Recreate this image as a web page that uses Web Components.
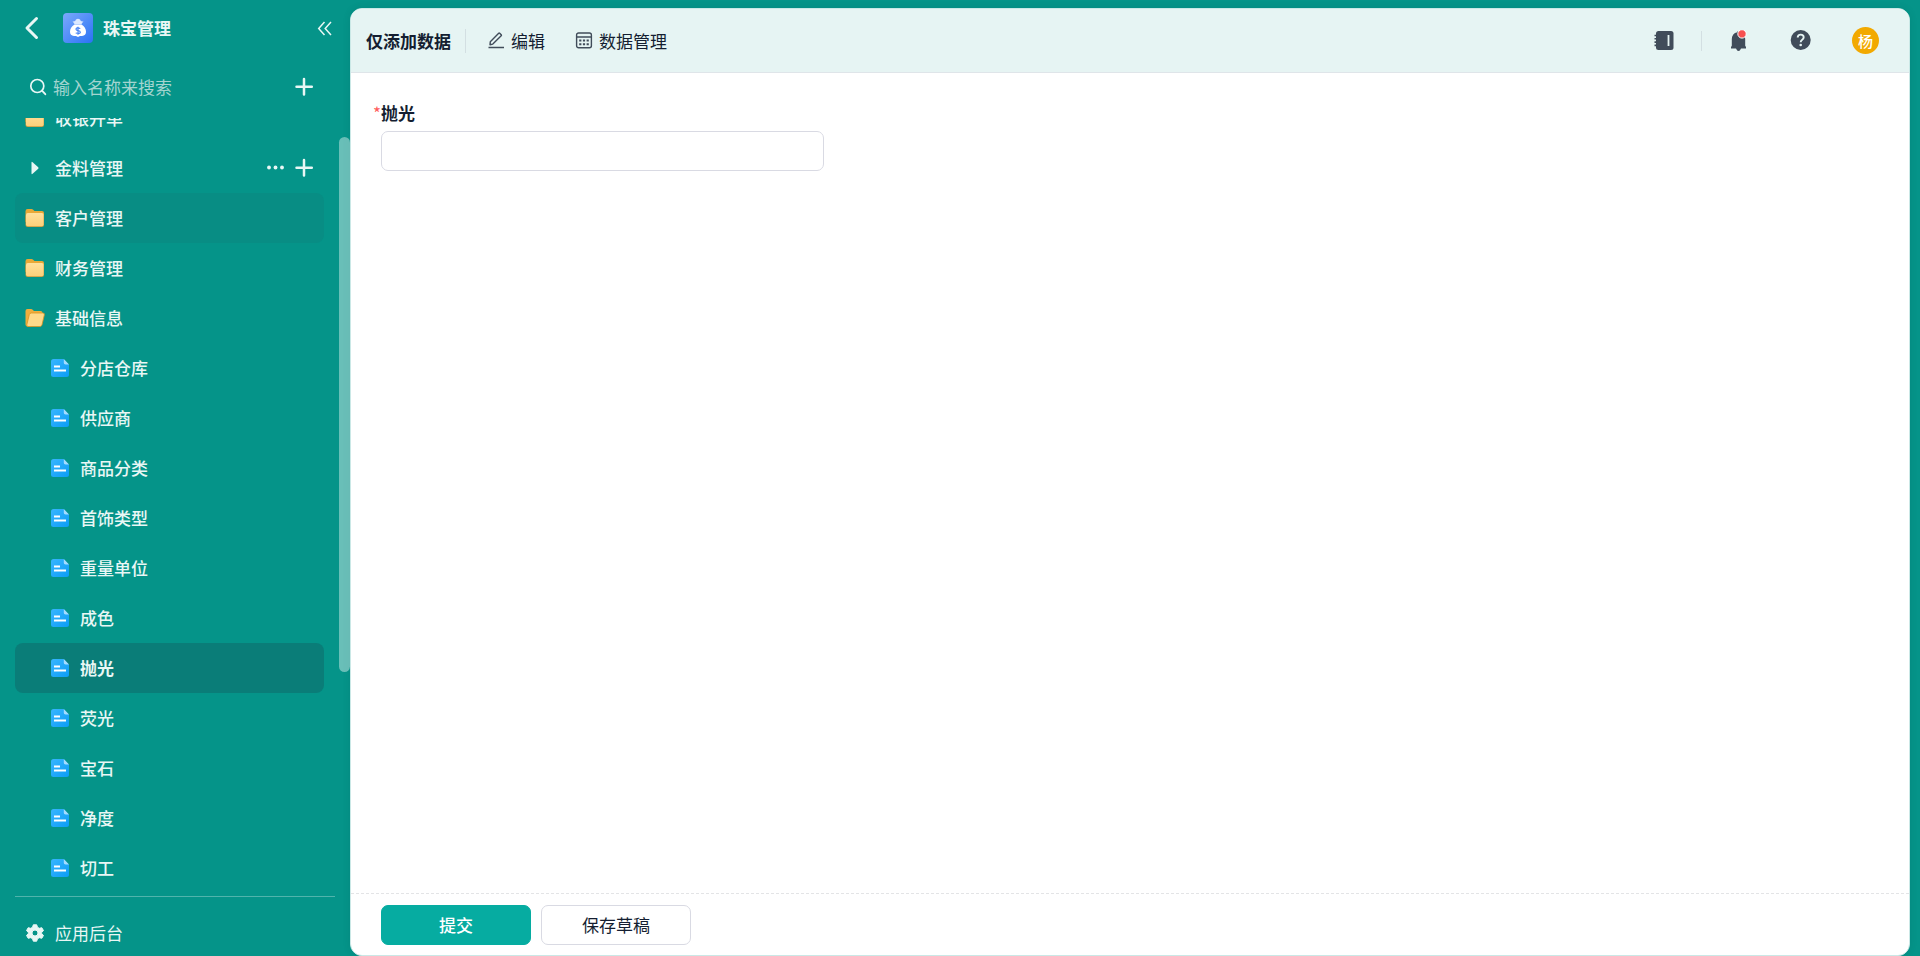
<!DOCTYPE html>
<html lang="zh-CN">
<head>
  <meta charset="utf-8">
  <title>珠宝管理</title>
  <style>
    html, body {
      height: 100%;
      margin: 0;
    }
    body {
      font: 17px/24px "Noto Sans CJK SC", sans-serif;
      color: #141e31;
      background: #059489;
    }
  </style>
</head>
<body>
  <app-shell>
    <side-bar slot="side">
      <nav-item icon="folder">收银开单</nav-item>
      <nav-item icon="caret" actions>金料管理</nav-item>
      <nav-item icon="folder" hovered>客户管理</nav-item>
      <nav-item icon="folder">财务管理</nav-item>
      <nav-item icon="folderOpen">基础信息</nav-item>
      <nav-item icon="form" child>分店仓库</nav-item>
      <nav-item icon="form" child>供应商</nav-item>
      <nav-item icon="form" child>商品分类</nav-item>
      <nav-item icon="form" child>首饰类型</nav-item>
      <nav-item icon="form" child>重量单位</nav-item>
      <nav-item icon="form" child>成色</nav-item>
      <nav-item icon="form" child active>抛光</nav-item>
      <nav-item icon="form" child>荧光</nav-item>
      <nav-item icon="form" child>宝石</nav-item>
      <nav-item icon="form" child>净度</nav-item>
      <nav-item icon="form" child>切工</nav-item>
    </side-bar>
    <top-bar slot="header">仅添加数据</top-bar>
    <form-field slot="content" required>抛光</form-field>
    <app-button slot="footer" primary>提交</app-button>
    <app-button slot="footer">保存草稿</app-button>
  </app-shell>

  <script>
    const ICONS = {
      folder: `<svg width="20" height="20" viewBox="0 0 20 20">
        <defs><linearGradient id="f" x1="0" y1="0" x2="0" y2="1"><stop stop-color="#ffe09c"/><stop offset="1" stop-color="#fdd07a"/></linearGradient></defs>
        <path d="M.5 3.2Q.5 1 2.700 1H6.500Q7.500 1 8.200 1.700L9.500 3H17Q19 3 19 5V14H.5Z" fill="#e9a937"/>
        <rect x=".5" y="6" width="18.500" height="13" rx="2" fill="#c99a3e"/>
        <rect x="1" y="5" width="17.600" height="13.200" rx="1.800" fill="url(#f)"/></svg>`,
      folderOpen: `<svg width="20" height="20" viewBox="0 0 20 20">
        <path d="M.5 3Q.5 1 2.500 1H6Q7 1 7.700 1.700L9 3H15.500Q17.500 3 17.500 5V9L6 18.500H2.500Q.5 18.500.5 16.500Z" fill="#f0ad3c"/>
        <path d="M6.300 5H17.800Q19.800 5 19.300 7L17 16.800Q16.600 18.500 15 18.500H3Q1.300 18.500 1.800 16.800L4.300 6.600Q4.700 5 6.300 5Z" fill="#ffd98a" stroke="#d99422" stroke-width=".8"/></svg>`,
      form: `<svg width="20" height="20" viewBox="0 0 20 20">
        <defs><linearGradient id="g" x1="0" y1="0" x2="1" y2="1"><stop stop-color="#38b5ff"/><stop offset="1" stop-color="#0c9df5"/></linearGradient></defs>
        <path d="M3.500 1H13.500L19 6.500V16.500Q19 19 16.500 19H3.500Q1 19 1 16.500V3.500Q1 1 3.500 1Z" fill="url(#g)"/>
        <path d="M13.800 1L19 6.500H15.500Q13.800 6.500 13.800 4.800Z" fill="#a5dcff"/>
        <path d="M4 8.500H10M4 12.500H16" stroke="#fff" stroke-width="2"/></svg>`,
      caret: `<svg width="20" height="20" viewBox="0 0 20 20"><path d="M6.500 4.800Q6.500 3.300 7.600 4.200L13.200 9.300Q13.900 10 13.200 10.700L7.600 15.800Q6.500 16.700 6.500 15.200Z" fill="currentColor"/></svg>`,
      dots: `<svg width="20" height="20" viewBox="0 0 20 20" fill="currentColor"><circle cx="3" cy="9.500" r="1.900"/><circle cx="9.500" cy="9.500" r="1.900"/><circle cx="16" cy="9.500" r="1.900"/></svg>`,
      plus: `<svg width="20" height="20" viewBox="0 0 20 20"><path d="M10 2V17.500M2.500 9.700H17.800" stroke="currentColor" stroke-width="2.500" stroke-linecap="round"/></svg>`,
      back: `<svg width="16" height="24" viewBox="0 0 16 24"><path d="M12.500 2.500L3 12L12.500 21.500" fill="none" stroke="currentColor" stroke-width="3" stroke-linecap="round" stroke-linejoin="round"/></svg>`,
      collapse: `<svg width="16" height="16" viewBox="0 0 16 16"><path d="M7.500 2L1.700 8.500L7.500 15M14 2L8.200 8.500L14 15" fill="none" stroke="currentColor" stroke-width="1.500"/></svg>`,
      search: `<svg width="18" height="18" viewBox="0 0 18 18"><circle cx="8.300" cy="8" r="6.500" fill="none" stroke="currentColor" stroke-width="1.700"/><path d="M13 12.700L16.300 16.200" stroke="currentColor" stroke-width="1.900" stroke-linecap="round"/></svg>`,
      gear: `<svg width="20" height="20" viewBox="0 0 20 20"><path d="M8.300 1.800H11.700L12.500 4.300L14.300 5.300L16.800 4.700L18.500 7.600L16.700 9.300V10.700L18.500 12.400L16.800 15.300L14.300 14.700L12.500 15.700L11.700 18.200H8.300L7.500 15.700L5.700 14.700L3.200 15.300L1.500 12.400L3.300 10.700V9.300L1.500 7.600L3.200 4.700L5.700 5.300L7.500 4.300ZM10 7A3 3 0 1 0 10 13A3 3 0 1 0 10 7Z" fill="currentColor" stroke="currentColor" stroke-width="1" stroke-linejoin="round" fill-rule="evenodd"/></svg>`,
      logo: `<svg width="30" height="30" viewBox="0 0 30 30">
        <defs><linearGradient id="l" x1="0" y1="0" x2="1" y2="1"><stop stop-color="#7ba9fb"/><stop offset="1" stop-color="#2a72f5"/></linearGradient></defs>
        <rect width="30" height="30" rx="4" fill="url(#l)"/>
        <path d="M9.500 8.300Q12.500 8.800 13 6.500Q15 5.200 17 6.500Q17.500 8.800 20.500 8.300L18.300 11.200H11.700Z" fill="#dbe8ff"/>
        <path d="M11.500 11.500H18.500Q23 14.500 23 18.800Q23 22.500 19 23H17L15 24L13 23H11Q7 22.500 7 18.800Q7 14.500 11.500 11.500Z" fill="#fff"/>
        <path d="M17.300 15.500Q13 14 13 16.300Q13 17.500 15 17.700Q17.300 18 17.300 19.300Q17 21.200 12.700 20M15 13.800V21.800" fill="none" stroke="#4583f6" stroke-width="1.200"/></svg>`,
      pencil: `<svg width="18" height="18" viewBox="0 0 18 18" fill="none" stroke="currentColor" stroke-width="1.400" stroke-linejoin="round"><path d="M3 12.700L3.300 9.700L11.700 1.300Q12.200.8 12.700 1.300L14.200 2.800Q14.700 3.300 14.200 3.800L5.800 12.100Z"/><path d="M1.500 15.600H17" stroke-width="1.500"/></svg>`,
      table: `<svg width="18" height="18" viewBox="0 0 18 18" fill="none" stroke="currentColor" stroke-width="1.400"><rect x="1.600" y="1" width="14.800" height="14.800" rx="2"/><path d="M1.600 5H16.400"/><path d="M4.200 8.500H6.400M7.900 8.500H10.100M11.600 8.500H13.800M4.200 12.200H6.400M7.900 12.200H10.100M11.600 12.200H13.800" stroke-width="2"/></svg>`,
      book: `<svg width="22" height="22" viewBox="0 0 22 22"><rect x="3" y="1" width="17.500" height="19" rx="2.500" fill="currentColor"/><path d="M1.500 5.500H4.500M1.500 8.800H4.500M1.500 12.100H4.500M1.500 15.400H4.500" stroke="currentColor" stroke-width="1.600"/><path d="M15.500 5V16" stroke="#e6f4f3" stroke-width="1.800"/></svg>`,
      bell: `<svg width="22" height="22" viewBox="0 0 22 22"><path d="M10.500 1Q11.700 1 11.700 2.300Q17.200 3.500 17.200 9V15.700L18 17V18.500H13Q12 21 10.500 21Q9 21 8 18.500H3V17L3.800 15.700V9Q4 3.500 9.300 2.300Q9.300 1 10.500 1Z" fill="currentColor"/><circle cx="14" cy="3.900" r="4.200" fill="#f74f50" stroke="#fff" stroke-width="1"/></svg>`,
      help: `<svg width="22" height="22" viewBox="0 0 22 22"><circle cx="10.700" cy="10" r="10" fill="currentColor"/><path d="M7.700 7.600Q7.700 4.600 10.700 4.600T13.700 7.300Q13.700 8.700 12.200 9.700Q10.700 10.700 10.700 12.300" fill="none" stroke="#e6f4f3" stroke-width="1.900"/><circle cx="10.700" cy="15" r="1.300" fill="#e6f4f3"/></svg>`,
    }

    class AppShell extends HTMLElement {
      constructor() {
        super()
        this.attachShadow({ mode: 'open' })
      }

      connectedCallback() {
        this.shadowRoot.innerHTML = `
          <style>
            :host {
              display: flex;
              height: 100vh;
            }
            .card {
              flex: 1;
              min-width: 0;
              box-sizing: border-box;
              display: flex;
              flex-direction: column;
              margin: 8px 10px 0 0;
              border: 1px solid #cae8e6;
              border-radius: 12px;
              overflow: hidden;
              background: #fff;
              box-shadow: 0 0 8px rgba(0, 0, 0, 0.08);
            }
            main {
              flex: 1;
              overflow: auto;
              padding: 28px 30px;
            }
            footer {
              display: flex;
              gap: 10px;
              padding: 11px 30px 10px;
              border-top: 1px dashed #e3e4e6;
            }
          </style>
          <slot name="side"></slot>
          <div class="card">
            <slot name="header"></slot>
            <main><slot name="content"></slot></main>
            <footer><slot name="footer"></slot></footer>
          </div>
        `
      }
    }

    class SideBar extends HTMLElement {
      constructor() {
        super()
        this.attachShadow({ mode: 'open' })
      }

      _updateThumb() {
        const list = this.shadowRoot.querySelector("nav")
        const thumb = this.shadowRoot.querySelector(".thumb")
        thumb.style.height = `${list.clientHeight / list.scrollHeight * 100}%`
        thumb.style.top = `${list.scrollTop / list.scrollHeight * 100}%`
      }

      connectedCallback() {
        this.shadowRoot.innerHTML = `
          <style>
            :host {
              display: flex;
              flex-direction: column;
              width: 350px;
              flex: none;
              color: #e9f7f5;
            }
            svg { display: block; }
            button {
              padding: 0;
              border: none;
              background: none;
              color: inherit;
              cursor: pointer;
            }
            header {
              display: flex;
              align-items: center;
              height: 56px;
              padding: 0 17px 0 24px;
            }
            .logo { margin: 0 10px 0 23px; }
            h1 {
              flex: 1;
              margin: 0;
              font-size: 17px;
              font-weight: 700;
            }
            .search {
              display: flex;
              align-items: center;
              gap: 6px;
              height: 62px;
              padding: 0 36px 0 29px;
            }
            input {
              flex: 1;
              min-width: 0;
              padding: 0;
              border: none;
              outline: none;
              background: none;
              font: inherit;
              color: inherit;
            }
            input::placeholder { color: #a3d5d0; opacity: 1; }
            .scroll {
              position: relative;
              flex: 1;
              min-height: 0;
              display: flex;
            }
            nav {
              flex: 1;
              overflow-y: auto;
              scrollbar-width: none;
              padding: 2px 26px 328px 15px;
            }
            .thumb {
              position: absolute;
              right: 0;
              width: 11px;
              border-radius: 6px;
              background: rgba(255, 255, 255, 0.4);
            }
            footer {
              margin: 0 15px;
              height: 59px;
              border-top: 1px solid #50b4ac;
            }
            footer a {
              display: flex;
              align-items: center;
              gap: 10px;
              height: 71px;
              padding-left: 10px;
              color: inherit;
              text-decoration: none;
            }
          </style>

          <header>
            <button aria-label="返回">${ICONS.back}</button>
            <span class="logo">${ICONS.logo}</span>
            <h1>珠宝管理</h1>
            <button aria-label="收起">${ICONS.collapse}</button>
          </header>
          <div class="search">
            ${ICONS.search}
            <input type="text" placeholder="输入名称来搜索" aria-label="输入名称来搜索">
            <button aria-label="新建">${ICONS.plus}</button>
          </div>
          <div class="scroll">
            <nav><slot></slot></nav>
            <span class="thumb"></span>
          </div>
          <footer><a href="#">${ICONS.gear}应用后台</a></footer>
        `

        const list = this.shadowRoot.querySelector("nav")
        list.addEventListener("scroll", () => this._updateThumb())
        window.addEventListener("resize", () => this._updateThumb())
      }
    }

    class NavItem extends HTMLElement {
      constructor() {
        super()
        this.attachShadow({ mode: 'open' })
      }

      connectedCallback() {
        const actions = this.hasAttribute("actions")
          ? `<button aria-label="更多">${ICONS.dots}</button><button aria-label="新建">${ICONS.plus}</button>`
          : ""

        this.shadowRoot.innerHTML = `
          <style>
            :host {
              display: flex;
              align-items: center;
              gap: 8px;
              height: 50px;
              padding: 0 10px;
              border-radius: 8px;
              font-weight: 500;
            }
            :host([child]) { padding-left: 35px; }
            :host([hovered]), :host(:hover) { background: #088d84; }
            :host([active]) {
              background: #0a7d78;
              font-weight: 700;
            }
            svg { display: block; }
            a {
              flex: 1;
              display: flex;
              align-items: center;
              gap: 10px;
              color: inherit;
              text-decoration: none;
            }
            button {
              padding: 0;
              border: none;
              background: none;
              color: inherit;
              cursor: pointer;
            }
          </style>
          <a href="#">${ICONS[this.getAttribute("icon")]}<slot></slot></a>
          ${actions}
        `
      }
    }

    class TopBar extends HTMLElement {
      constructor() {
        super()
        this.attachShadow({ mode: 'open' })
      }

      connectedCallback() {
        this.shadowRoot.innerHTML = `
          <style>
            :host {
              display: flex;
              align-items: center;
              justify-content: space-between;
              height: 63px;
              padding: 0 30px 0 15px;
              background: #e6f4f3;
              border-bottom: 1px solid #dfe5e9;
            }
            svg { display: block; }
            div { display: flex; align-items: center; }
            h2 {
              margin: 0 14px 0 0;
              font-size: 17px;
              font-weight: 700;
            }
            .line {
              width: 1px;
              height: 24px;
              background: #d3dfe2;
            }
            button {
              display: flex;
              align-items: center;
              padding: 0;
              border: none;
              background: none;
              font: inherit;
              color: inherit;
              cursor: pointer;
            }
            button svg { color: #414c5a; }
            .tabs { gap: 30px; margin-left: 21px; }
            .tabs button { gap: 6px; }
            .tools { gap: 40px; }
            .notes { gap: 26px; }
            .notes .line { height: 20px; }
            .avatar {
              justify-content: center;
              width: 27px;
              height: 27px;
              border-radius: 50%;
              background: #f2a900;
              color: #fff;
              font-size: 15px;
              font-weight: 500;
            }
          </style>

          <div>
            <h2><slot></slot></h2>
            <span class="line"></span>
            <div class="tabs">
              <button>${ICONS.pencil}编辑</button>
              <button>${ICONS.table}数据管理</button>
            </div>
          </div>
          <div class="tools">
            <div class="notes">
              <button aria-label="通讯录">${ICONS.book}</button>
              <span class="line"></span>
              <button aria-label="通知">${ICONS.bell}</button>
            </div>
            <button aria-label="帮助">${ICONS.help}</button>
            <button class="avatar">杨</button>
          </div>
        `
      }
    }

    class FormField extends HTMLElement {
      constructor() {
        super()
        this.attachShadow({ mode: 'open' })
      }

      connectedCallback() {
        this.shadowRoot.innerHTML = `
          <style>
            :host {
              display: flex;
              flex-direction: column;
              gap: 6px;
              width: calc(30% - 6px);
              min-width: 240px;
            }
            label { position: relative; font-weight: 700; }
            :host([required]) label::before {
              content: "*";
              position: absolute;
              right: 100%;
              color: #ff5b5b;
              font-weight: 400;
            }
            input {
              box-sizing: border-box;
              width: 100%;
              height: 40px;
              padding: 0 12px;
              border: 1px solid #d9dae3;
              border-radius: 7px;
              outline: none;
              font: inherit;
              color: inherit;
            }
            input:focus { border-color: #06aca1; }
          </style>
          <label for="field"><slot></slot></label>
          <input type="text" id="field">
        `
      }
    }

    class AppButton extends HTMLElement {
      constructor() {
        super()
        this.attachShadow({ mode: 'open' })
      }

      connectedCallback() {
        this.shadowRoot.innerHTML = `
          <style>
            :host { display: block; }
            button {
              width: 150px;
              height: 40px;
              padding: 0;
              border: 1px solid #d9dae3;
              border-radius: 7px;
              background: #fff;
              font: inherit;
              color: inherit;
              cursor: pointer;
            }
            :host([primary]) button {
              border-color: #06aca1;
              background: #06aca1;
              color: #fff;
              font-weight: 500;
            }
          </style>
          <button type="button"><slot></slot></button>
        `
      }
    }

    customElements.define("app-shell", AppShell)
    customElements.define("side-bar", SideBar)
    customElements.define("nav-item", NavItem)
    customElements.define("top-bar", TopBar)
    customElements.define("form-field", FormField)
    customElements.define("app-button", AppButton)

    // half of the first row is scrolled away
    const sideBar = document.querySelector("side-bar")
    sideBar.shadowRoot.querySelector("nav").scrollTop = 27
    sideBar._updateThumb()
  </script>
</body>
</html>
